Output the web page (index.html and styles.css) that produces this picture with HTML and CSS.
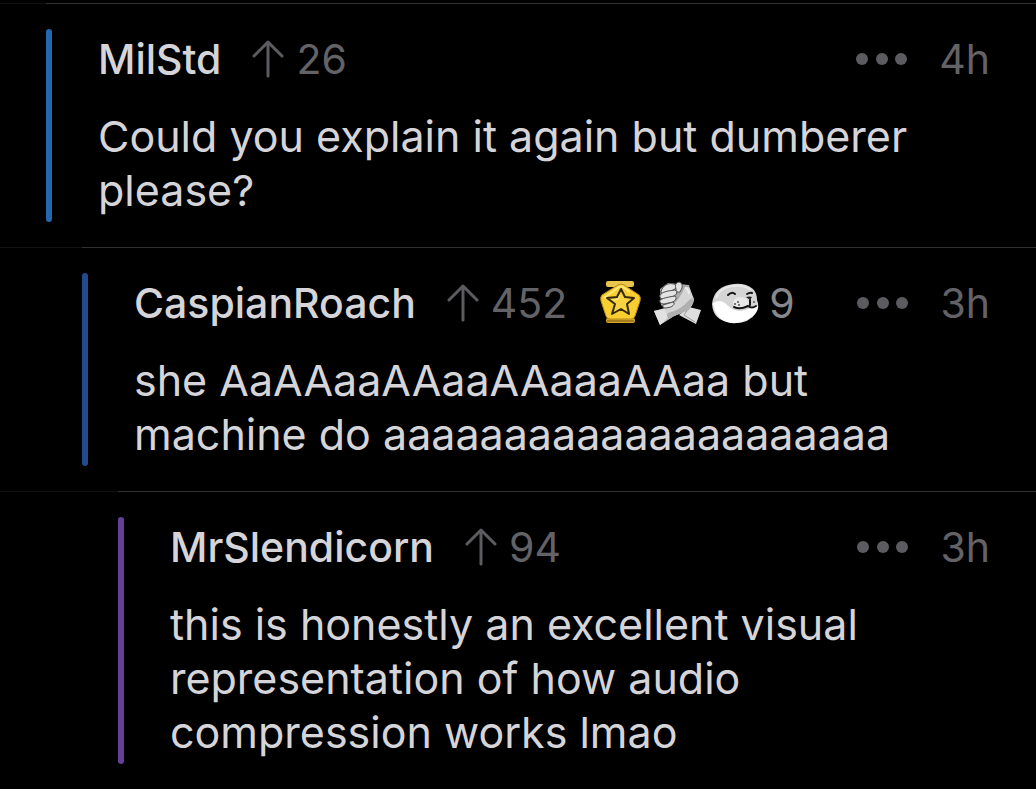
FILE: index.html
```html
<!DOCTYPE html>
<html lang="en">
    <head>
        <meta charset="utf-8">
        <title>Comments</title>
        <link rel="stylesheet" href="styles.css">
    </head>
    <body>
        <main class="thread">
            <article class="row">
                <div class="indent"></div>
                <div class="comment">
                    <div class="bar blue"></div>
                    <div class="content">
                        <header class="head">
                            <a class="author" href="#">MilStd</a>
                            <button class="vote">
                                <svg width="32" height="38" viewBox="0 0 32 38" aria-hidden="true"><path d="M16 36V2M2 16 16 2 30 16"/></svg>26
                            </button>
                            <button class="more" aria-label="More"><svg width="54" height="14" viewBox="0 0 54 14"><circle cx="7" cy="7" r="6"/><circle cx="27" cy="7" r="6"/><circle cx="46" cy="7" r="6"/></svg></button>
                            <time class="age">4h</time>
                        </header>
                        <p class="text">Could you explain it again but dumberer please?</p>
                    </div>
                </div>
            </article>

            <article class="row">
                <div class="indent level-1"></div>
                <div class="comment">
                    <div class="bar navy"></div>
                    <div class="content">
                        <header class="head">
                            <a class="author" href="#">CaspianRoach</a>
                            <button class="vote">
                                <svg width="32" height="38" viewBox="0 0 32 38" aria-hidden="true"><path d="M16 36V2M2 16 16 2 30 16"/></svg>452
                            </button>
                            <div class="awards">
                                <!-- gold star medal -->
                                <svg width="52" height="52" viewBox="0 0 52 52" aria-hidden="true">
                                    <rect x="11" y="4" width="28" height="6" rx="2" fill="#e9c54d"/>
                                    <rect x="11" y="41" width="29" height="5" rx="2" fill="#d5a62a"/>
                                    <path d="M12 44H39" stroke="#705310" stroke-width="1"/>
                                    <path d="M23 8Q26 6 29 8L44 18Q46 20 45 24L40 39Q39 42 36 42H15Q12 42 11 39L6 24Q5 20 7 18Z" fill="#f8ce31" stroke="#b98b18" stroke-width="1"/>
                                    <path d="M9 21 24 10Q26 9 28 10L35 15" fill="none" stroke="#ffe779" stroke-width="2"/>
                                    <path d="M26 12 30 20 39 21 32 27 34 37 26 32 17 37 20 27 12 21 22 20Z" fill="#f7d342" stroke="#35290d" stroke-width="2" stroke-linejoin="round"/>
                                    <path d="M25 18 23 22 18 23" fill="none" stroke="#ffeb8e" stroke-width="1"/>
                                </svg>
                                <!-- clasped hands -->
                                <svg width="52" height="52" viewBox="0 0 52 52" aria-hidden="true">
                                    <path d="M38 30 50 33 45 47 28 38Z" fill="#dedede"/>
                                    <path d="M38 31 33 38 44 45" fill="none" stroke="#9b9b9b" stroke-width="1"/>
                                    <path d="M9 12 17 6 38 8 42 24 38 33 23 39 10 28Z" fill="#aaa"/>
                                    <path d="M3 34 14 31 22 28Q28 22 31 16L34 10Q38 9 39 12L43 22Q43 29 35 34L23 39 9 48Z" fill="#d5d5d5"/>
                                    <path d="M17 36Q30 33 38 23L42 21Q43 29 35 34L23 39 12 46Z" fill="#b0b0b0"/>
                                    <path d="M3 34 13 32 17 41 9 48Z" fill="#e2e2e2"/>
                                    <g fill="#e3e3e3" stroke="#555" stroke-width="1">
                                        <path d="M11 12Q15 5 23 7Q27 9 24 12L14 17Q8 17 11 12Z"/>
                                        <path d="M9 18Q11 15 17 14L24 13Q28 16 23 19L13 22Q8 22 9 18Z"/>
                                        <path d="M9 23Q12 21 18 20L24 19Q27 22 22 25L13 27Q8 27 9 23Z"/>
                                        <path d="M12 28 22 25Q25 27 20 30L15 31Q11 31 12 28Z"/>
                                        <path d="M25 12Q23 6 28 5Q32 6 31 11L29 15Q25 16 25 12Z"/>
                                    </g>
                                    <path d="M34 11Q37 11 38 17" fill="none" stroke="#ececec" stroke-width="2"/>
                                </svg>
                                <!-- smiling seal -->
                                <svg width="56" height="52" viewBox="0 0 56 52" aria-hidden="true">
                                    <path d="M27 7Q39 6 46 12Q50 16 50 23Q53 30 49 36Q42 47 25 46Q6 44 5 27Q7 9 27 7Z" fill="#d5d5d5"/>
                                    <path d="M6 26Q14 21 21 29Q29 36 38 33L51 29Q50 37 43 41Q35 47 24 46Q8 43 6 26Z" fill="#fff"/>
                                    <path d="M9 21Q12 11 25 9Q38 8 44 13" fill="none" stroke="#e9e9e9" stroke-width="2"/>
                                    <ellipse cx="34" cy="26" rx="8" ry="6" fill="#e8e8e8"/>
                                    <g fill="none" stroke="#151515" stroke-width="2" stroke-linecap="round">
                                        <path d="M21 18Q25 14 28 17M40 17Q43 15 45 16"/>
                                        <path d="M27 30Q33 33 41 29Q45 32 49 29M43 23V28"/>
                                    </g>
                                    <path d="M39 20Q43 19 45 20L43 23Z" fill="#202020"/>
                                    <g fill="#555"><circle cx="28" cy="27" r="1"/><circle cx="32" cy="28" r="1"/><circle cx="31" cy="25" r="1"/><circle cx="47" cy="25" r="1"/></g>
                                </svg>
                                <span class="count">9</span>
                            </div>
                            <button class="more" aria-label="More"><svg width="54" height="14" viewBox="0 0 54 14"><circle cx="7" cy="7" r="6"/><circle cx="27" cy="7" r="6"/><circle cx="46" cy="7" r="6"/></svg></button>
                            <time class="age">3h</time>
                        </header>
                        <p class="text">she AaAAaaAAaaAAaaaAAaa but machine do aaaaaaaaaaaaaaaaaaaaa</p>
                    </div>
                </div>
            </article>

            <article class="row">
                <div class="indent level-2"></div>
                <div class="comment">
                    <div class="bar purple"></div>
                    <div class="content">
                        <header class="head">
                            <a class="author" href="#">MrSlendicorn</a>
                            <button class="vote">
                                <svg width="32" height="38" viewBox="0 0 32 38" aria-hidden="true"><path d="M16 36V2M2 16 16 2 30 16"/></svg>94
                            </button>
                            <button class="more" aria-label="More"><svg width="54" height="14" viewBox="0 0 54 14"><circle cx="7" cy="7" r="6"/><circle cx="27" cy="7" r="6"/><circle cx="46" cy="7" r="6"/></svg></button>
                            <time class="age">3h</time>
                        </header>
                        <p class="text">this is honestly an excellent visual representation of how audio compression works lmao</p>
                    </div>
                </div>
            </article>
        </main>
    </body>
</html>
```

FILE: styles.css
```css
body{
    margin: 0;
    background-color: #000;
    color: #d5d5d9;
    font-family: Inter, "Liberation Sans", sans-serif;
    font-size: 43px;
    line-height: 54px;
}
.thread{
    padding-top: 3px;
}
.row{
    display: flex;
}
.indent{
    flex: none;
    width: 46px;
    border-top: 1px solid #121213;
}
.level-1{
    width: 82px;
}
.level-2{
    width: 118px;
}
.comment{
    display: flex;
    flex: 1;
    min-width: 0;
    gap: 46px;
    padding: 25px 46px 25px 0;
    border-top: 1px solid #303034;
}
.bar{
    flex: none;
    width: 6px;
    border-radius: 3px;
}
.blue{
    background-color: #2467ae;
}
.navy{
    background-color: #214b8d;
}
.purple{
    background-color: #663f98;
}
.content{
    flex: 1;
    min-width: 0;
    padding: 3px 0 5px;
}
.head{
    display: flex;
    align-items: center;
    height: 54px;
    margin-bottom: 23px;
    color: #636367;
    font-size: 41px;
}
.author{
    color: #d5d5d9;
    font-weight: 500;
    text-decoration: none;
}
button{
    display: flex;
    align-items: center;
    padding: 0;
    border: none;
    background-color: transparent;
    color: inherit;
    font: inherit;
}
.vote{
    gap: 12px;
    margin-left: 31px;
}
.vote path{
    fill: none;
    stroke: #5c5c60;
    stroke-width: 3;
    stroke-linecap: round;
    stroke-linejoin: round;
}
.awards{
    display: flex;
    align-items: center;
    gap: 4px;
    margin-left: 28px;
}
.count{
    margin-left: 2px;
    color: #88888c;
}
.more{
    margin-left: auto;
    fill: #5c5c60;
}
.age{
    margin-left: 30px;
}
.text{
    margin: 0;
    padding-right: 10px;
}
```
